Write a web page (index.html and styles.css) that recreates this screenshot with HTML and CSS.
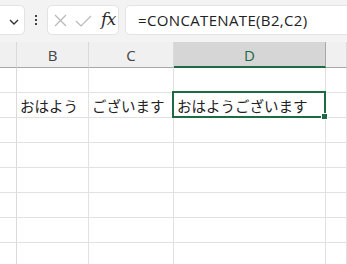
FILE: index.html
```html
<!DOCTYPE html>
<html lang="ja">
<head>
<meta charset="utf-8">
<link rel="stylesheet" href="styles.css">
</head>
<body>
<div class="app">
  <div class="toolbar">
    <div class="namebox">
      <svg class="chev" width="10" height="6" viewBox="0 0 10 6"><path d="M1 1 L5 5 L9 1" fill="none" stroke="#333" stroke-width="1.4"/></svg>
    </div>
    <div class="dots"><span></span><span></span><span></span></div>
    <div class="fbuttons">
      <svg class="xicon" width="13" height="13" viewBox="0 0 13 13"><path d="M1 1 L12 12 M12 1 L1 12" stroke="#b8b8b8" stroke-width="1.2" fill="none"/></svg>
      <svg class="check" width="17" height="12" viewBox="0 0 17 12"><path d="M1 6 L6 11 L16 1" stroke="#b8b8b8" stroke-width="1.2" fill="none"/></svg>
      <span class="fx">fx</span>
    </div>
    <div class="formula">=CONCATENATE(B2,C2)</div>
  </div>
  <div class="sheet">
    <div class="hdr corner"></div>
    <div class="hdr">B</div>
    <div class="hdr">C</div>
    <div class="hdr sel">D</div>
    <div class="hdr"></div>

    <div class="rh"></div><div class="cell"></div><div class="cell"></div><div class="cell"></div><div class="cell"></div>

    <div class="rh"></div>
    <div class="cell">おはよう</div>
    <div class="cell">ございます</div>
    <div class="cell active">おはようございます<span class="handle"></span></div>
    <div class="cell"></div>

    <div class="rh"></div><div class="cell"></div><div class="cell"></div><div class="cell"></div><div class="cell"></div>
    <div class="rh"></div><div class="cell"></div><div class="cell"></div><div class="cell"></div><div class="cell"></div>
    <div class="rh"></div><div class="cell"></div><div class="cell"></div><div class="cell"></div><div class="cell"></div>
    <div class="rh"></div><div class="cell"></div><div class="cell"></div><div class="cell"></div><div class="cell"></div>
    <div class="rh"></div><div class="cell"></div><div class="cell"></div><div class="cell"></div><div class="cell"></div>
    <div class="rh"></div><div class="cell"></div><div class="cell"></div><div class="cell"></div><div class="cell"></div>
  </div>
</div>
</body>
</html>
```
FILE: styles.css
```css
html, body {
  margin: 0;
  padding: 0;
  background: #ffffff;
}
.app {
  width: 347px;
  height: 264px;
  overflow: hidden;
  font-family: "Open Sans", "Noto Sans CJK JP", sans-serif;
}
.toolbar {
  height: 42px;
  box-sizing: border-box;
  padding: 5px 0 7px 0;
  background: #f3f3f3;
  display: flex;
  align-items: stretch;
}
.namebox {
  width: 30px;
  margin-left: -5px;
  box-sizing: border-box;
  background: #fff;
  border: 1px solid #e3e3e3;
  border-radius: 5px;
  display: flex;
  align-items: center;
  justify-content: flex-end;
  padding-right: 5px;
}
.chev { display: block; margin-top: 3px; }
.dots {
  width: 22px;
  display: flex;
  flex-direction: column;
  align-items: center;
  justify-content: center;
  gap: 2px;
}
.dots span {
  width: 2px;
  height: 2px;
  background: #444;
}
.fbuttons {
  width: 72px;
  box-sizing: border-box;
  background: #fff;
  border: 1px solid #e3e3e3;
  border-radius: 5px;
  display: flex;
  align-items: center;
  padding-left: 6px;
}
.xicon { display: block; margin-right: 8px; }
.check { display: block; margin-right: 9px; margin-top: 1px; }
.fx {
  font-family: "DejaVu Serif", serif;
  font-style: italic;
  font-size: 17px;
  color: #2a2a2a;
  letter-spacing: -0.5px;
  margin-top: -3px;
}
.formula {
  flex: 1;
  margin-left: 6px;
  margin-right: -10px;
  box-sizing: border-box;
  background: #fff;
  border: 1px solid #e3e3e3;
  border-radius: 5px;
  padding-left: 12px;
  display: flex;
  align-items: center;
  font-size: 15px;
  letter-spacing: 0.35px;
  color: #222;
  padding-bottom: 1px;
}
.sheet {
  display: grid;
  grid-template-columns: 17px 72px 85px 152px 1fr;
  grid-template-rows: 26px repeat(8, 25px);
}
.hdr {
  background: #f0f0f0;
  border-right: 1px solid #dadada;
  border-bottom: 1px solid #a8a8a8;
  box-sizing: border-box;
  display: flex;
  align-items: center;
  justify-content: center;
  font-size: 15px;
  color: #444;
}
.hdr.sel {
  background: #d6d6d6;
  color: #1e6b43;
  border-bottom: 2px solid #1e6b43;
  border-right-color: #a8a8a8;
  padding-top: 1px;
}
.rh {
  border-right: 1px solid #dadada;
  border-bottom: 1px solid #e1e1e1;
  box-sizing: border-box;
  background: #fff;
}
.cell {
  border-right: 1px solid #e1e1e1;
  border-bottom: 1px solid #e1e1e1;
  box-sizing: border-box;
  display: flex;
  align-items: center;
  padding-left: 3px;
  font-family: "Noto Sans CJK JP", sans-serif;
  font-size: 14.5px;
  color: #222;
  white-space: nowrap;
  position: relative;
}
.cell.active::after {
  content: "";
  position: absolute;
  top: -2px;
  left: -2px;
  right: -1px;
  bottom: -1px;
  border: 2px solid #1e6b43;
}
.handle {
  position: absolute;
  right: -3px;
  bottom: -3px;
  width: 5px;
  height: 5px;
  background: #1e6b43;
  border: 1px solid #fff;
  z-index: 2;
}
```
